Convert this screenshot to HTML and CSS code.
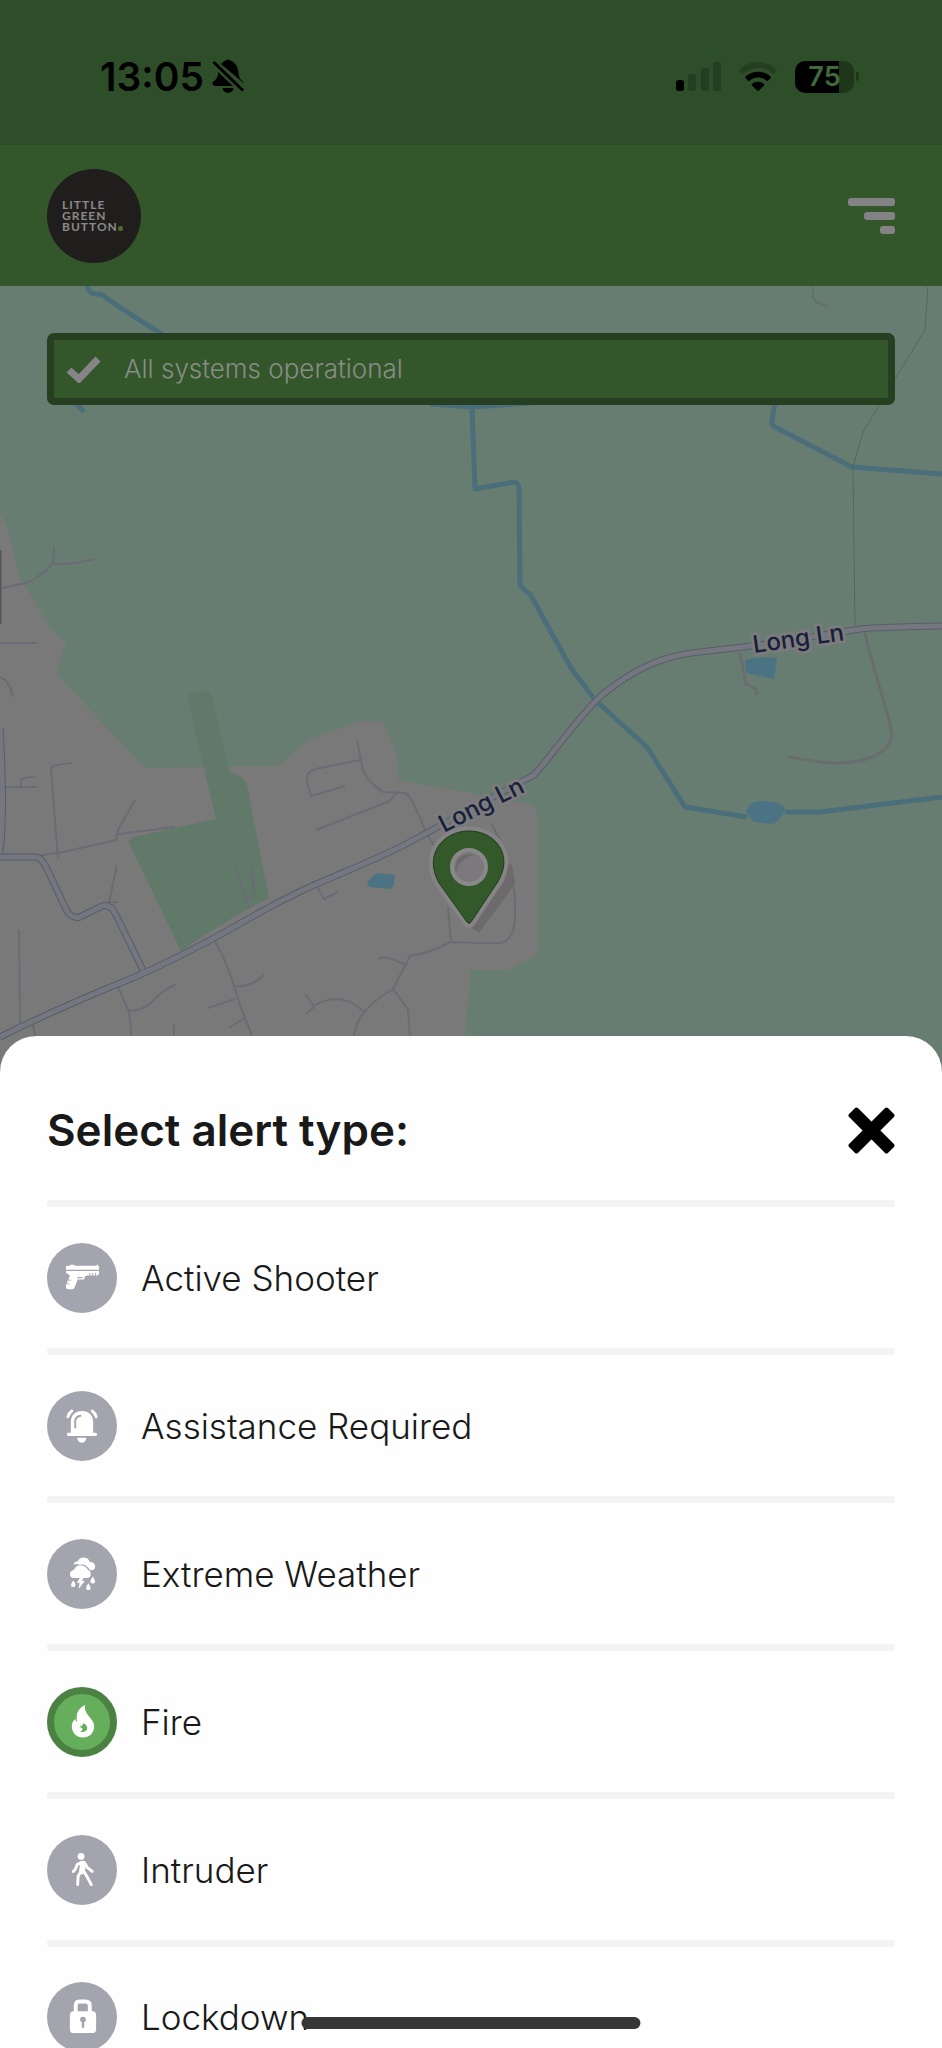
FILE: index.html
```html
<!DOCTYPE html>
<html lang="en">
<head>
<meta charset="utf-8">
<meta name="viewport" content="width=device-width, initial-scale=1">
<title>Little Green Button</title>
<link rel="stylesheet" href="styles.css">
</head>
<body>
<div class="app">
  <div class="status-bar">
    <div class="status-left">
      <span class="time">13:05</span>
      <svg class="bell-off" viewBox="0 0 32 36" aria-hidden="true">
        <path d="M9 5C11 2.500 13 2 13.500 1.500a4 4 0 0 1 5 0C24 4 26 8 26.500 14c.3 4 1.500 6 5 9v1L9 5ZM6 13l15 14H3a2.500 2.500 0 0 1-2-4c4-3.500 5-5 5-10Z"/>
        <path d="M10.500 29h11c-1 6.500-10 6.500-11 0Z"/>
        <path class="bell-slash" d="M1.500 3 31 31.500"/>
      </svg>
    </div>
    <div class="status-right">
      <svg class="signal" viewBox="0 0 45 29" aria-hidden="true">
        <rect x="0" y="18" width="8" height="11" rx="2.500"/>
        <g class="faint"><rect x="12" y="12" width="8" height="17" rx="2.500"/><rect x="25" y="6" width="8" height="23" rx="2.500"/><rect x="37" y="0" width="8" height="29" rx="2.500"/></g>
      </svg>
      <svg class="wifi" viewBox="0 0 38 29" aria-hidden="true">
        <path class="faint" d="M.5 7.500C11-2.500 27-2.500 37.500 7.500c.6.600.6 1 0 1.600L35 11.500c-.6.600-1 .5-1.500 0-8.500-7.500-20.500-7.500-29 0-.5.500-1 .6-1.500 0L.5 9.200c-.6-.6-.6-1.100 0-1.700Z"/>
        <path d="M6.500 14.500c7-6.500 18-6.500 25 0 .6.600.6 1 0 1.600L29 18.700c-.5.500-1 .5-1.500 0-5-4.400-12-4.400-17 0-.5.500-1 .5-1.500 0l-2.500-2.600c-.6-.6-.6-1 0-1.600Z"/>
        <path d="M13 22c3.500-3 8.500-3 12 0 .5.500.5 1 0 1.500l-5 5c-.7.600-1.300.6-2 0l-5-5c-.5-.5-.5-1 0-1.500Z"/>
      </svg>
      <span class="battery"><span class="battery-body">75</span><span class="battery-tip"></span></span>
    </div>
  </div>

  <header class="app-header">
    <div class="logo"><span>LITTLE</span><span>GREEN</span><span>BUTTON<i class="logo-dot"></i></span></div>
    <button class="menu-button" type="button" aria-label="Menu"><i></i><i></i><i></i></button>
  </header>

  <main class="map">
    <svg class="map-canvas" viewBox="0 286 942 790" preserveAspectRatio="xMidYMin slice" role="img" aria-label="Map">
      <rect class="field" x="0" y="286" width="942" height="790"/>
      <path class="town" d="M0 514 7 527 14 554 21 581 28 590 50 628 66 644 56 671 62 680 145 768 278 766 306 741 360 721H383L397 757 398 780 470 793 530 804Q537 806 537 815V955L507 970H471L461 1076H0Z"/>
      <path class="park" d="M188 697Q190 691 206 691 211 692 213 701L230 773Q246 775 248 790L269 898Q225 920 181 951L129 843Q128 839 134 837L216 819 188 700Z"/>
      <g class="water">
        <path d="M745 660Q760 656 777 658L774 679 746 673ZM746 812Q749 800 765 801 785 802 785 811 778 823 772 824L754 822ZM367 882 377 873 395 875 394 884 391 889 369 887Z"/>
      </g>
      <g class="river">
        <path d="M87 284Q88 296 101 294 115 305 165 336M75 402 84 412"/>
        <path d="M430 404 472 407 475 489 514 482Q519 482 519 490L520 584Q523 590 530 594L571 668 595 700 647 747 685 807 747 817M785 812 820 812 942 797"/>
        <path d="M472 407 530 403M776 397 772 420Q771 425 775 427L852 467 942 474"/>
      </g>
      <path class="footpath" d="M928 286 925 330 895 379 863 432 853 467 855 626"/>
      <g class="lane rural">
        <path d="M813 286V297Q815 304 829 306"/>
        <path class="drive" d="M740 653 746 684 756 689 757 695M865 633C870 660 889 712 892 735 889 757 858 763 838 763 815 763 800 758 788 757"/>
      </g>
      <g class="lane">
        <path d="M2 588 26 583Q40 578 53 563L54 546M53 563Q65 566 95 559M0 643H37M0 677Q10 681 13 697M5 787H37M21 787V780Q22 777 35 777M58 859 51 768Q51 765 72 763M36 856 63 852 116 840 118 830 135 800M118 834 175 827M19 930 20 1023M118 902 109 902 117 865M33 1025 38 1050M118 987 129 1012 133 1050M129 1011Q143 1010 151 1003 160 992 176 984M215 941Q228 965 234 986L241 1008Q250 1030 252 1036M234 986C246 987 256 983 264 975M208 1008 235 999M229 1028 246 1017M174 1024V1046"/>
        <path d="M357 740 363 770Q366 780 383 792L405 793Q412 796 425 830L434 846M360 760 315 769Q306 772 307 781L311 796 345 786M316 830 390 801 396 793M236 867 249 909M251 866 255 895 246 899M317 887 324 899 338 892M448 908 451 942 480 943 500 943Q513 941 515 920V900Q515 885 508 879M451 942Q430 953 410 956L393 989Q370 1002 360 1018 353 1030 352 1050M378 959Q385 954 405 965M393 989 408 1009 411 1050M305 994 314 1006Q340 990 363 1011M306 1014 315 1006M491 823 500 840"/>
      </g>
      <path class="road-edge" d="M0 1037C40 1017 65 1006 108 988 165 966 215 938 248 919 315 880 350 873 408 843L534 775C555 752 575 720 602 695 635 668 665 655 700 652L760 645 860 629Q880 627 942 626M0 857H36Q42 858 47 869L67 911Q72 919 80 917L102 906Q110 903 116 915L143 970M0 728Q5 810 0 853"/>
      <path class="road" d="M0 1037C40 1017 65 1006 108 988 165 966 215 938 248 919 315 880 350 873 408 843L534 775C555 752 575 720 602 695 635 668 665 655 700 652L760 645 860 629Q880 627 942 626M0 857H36Q42 858 47 869L67 911Q72 919 80 917L102 906Q110 903 116 915L143 970M0 728Q5 810 0 853"/>
      <path class="map-edge" d="M0 550V624"/>
      <g class="street-name">
        <text transform="translate(754 653) rotate(-8)">Long Ln</text>
        <text transform="translate(444 833) rotate(-27)">Long Ln</text>
      </g>
      <path class="pin-shadow" d="M475 930 510 882 507 865"/>
      <path class="pin-halo" d="M467 922 439 883C423 855 443 831 469 831S515 855 497 883L471 922Q469 925 467 922Z"/>
      <path class="pin" d="M467 922 439 883C423 855 443 831 469 831S515 855 497 883L471 922Q469 925 467 922Z"/>
      <circle class="pin-ring" cx="469" cy="867" r="17"/>
      <path class="pin-hole" d="M456 873C453 859 462 852 475 855 464 857 458 863 456 873Z"/>
    </svg>
    <div class="notice" role="status">
      <svg class="check" viewBox="0 0 36 28" aria-hidden="true"><path d="M3 15 13 24 32 4"/></svg>
      <span>All systems operational</span>
    </div>
  </main>

  <section class="sheet" role="dialog" aria-labelledby="sheet-title">
    <div class="sheet-header">
      <h1 id="sheet-title">Select alert type:</h1>
      <button class="close-button" type="button" aria-label="Close">
        <svg viewBox="0 0 47 47" aria-hidden="true"><path d="M8.500 2.500 23.500 17.500 38.500 2.500 44.500 8.500 29.500 23.500 44.500 38.500 38.500 44.500 23.500 29.500 8.500 44.500 2.500 38.500 17.500 23.500 2.500 8.500Z"/></svg>
      </button>
    </div>
    <ul class="alert-list">
      <li><button class="alert" type="button">
        <span class="badge"><svg viewBox="0 0 36 36" aria-hidden="true">
          <path d="M2 6 5 6 6 5h3l1 1h22l1-1h1v1l1 1v3H1V7Z"/>
          <path d="M1 11.200h34V15h-1.200v1H32v-3h-1v3h-2v-3h-1v3h-2v-3h-1v3h-2.500l-2 1-1 3h-6.500L12 23 9.500 29 8 30H3l-2-1V25h4v-.8H1.800L3 21h3.500v-.8H3.500L5 16 3 14.500 1 13Z"/>
          <path class="cut" d="M13 17.500h5.500l-1.200 1.300H12.500Z"/>
        </svg></span>
        <span>Active Shooter</span></button></li>
      <li><button class="alert" type="button">
        <span class="badge"><svg viewBox="0 0 36 36" aria-hidden="true">
          <path d="M6 25.500V15C6 7 10.500 3 17.500 3S29 7 29 15v10.500h2.500a1.500 1.500 0 0 1 0 3.200h-28a1.500 1.500 0 0 1 0-3.200ZM12.500 30.500h9.500c-.5 7-9 7-9.500 0Z"/>
          <path class="cut-line" d="M10.500 20v-6Q10.500 9 16 8"/>
          <path class="white-line" d="M3 9Q4 5 7 3M32 9Q31 5 28 3"/>
        </svg></span>
        <span>Assistance Required</span></button></li>
      <li><button class="alert" type="button">
        <span class="badge"><svg viewBox="0 0 36 36" aria-hidden="true">
          <path d="M9 8.500Q9.500 6 13 5.500 15 1 20 1.500q4 .5 5.500 4.500 5.500.5 5.500 5 0 4-5.500 3.500-3.500-7-10.500-5.500Q11.500 7.500 9 9Z"/>
          <path d="M8 22.500Q5 21.500 5 18.500 5.500 15 9 14.500 11 9.500 16 9.500q6 .5 7.500 5 3 .5 3 4 0 4-4 4Z"/>
          <path d="m16.500 21-4.500 6.500h3L14 34l6.500-8.500h-3.300L20 21ZM8.500 25q5 7-.2 7-4.500 0 .2-7ZM28.500 21q5 7.200-.1 7.200-4.500 0 .1-7.200ZM24 28q5 7-.1 7-4.600 0 .1-7Z"/>
        </svg></span>
        <span>Extreme Weather</span></button></li>
      <li><button class="alert selected" type="button" aria-pressed="true">
        <span class="badge"><svg viewBox="0 0 36 36" aria-hidden="true">
          <path fill-rule="evenodd" d="M20.500 1C13 5 11 10 12.500 18.500q-2-.5-1.500-3Q7 18 7 23c0 7 5 11.500 11.500 11.500S30 30 30 23c0-8.500-10.500-11-9.500-22ZM16 19c-1 5.500 2.500 4.500 2.500.5 8 3.500 4 11-3 9 2.500-.5 2.500-2 2.500-3.500-1.500.5-3-1.500-2-6Z"/>
        </svg></span>
        <span>Fire</span></button></li>
      <li><button class="alert" type="button">
        <span class="badge"><svg viewBox="0 0 36 36" aria-hidden="true">
          <circle cx="16.500" cy="4.500" r="3.500"/>
          <path class="body-line" d="M18.500 12 17.500 20"/>
          <path class="limb" d="m17 10.500-4.500 2.500-2 5-2 2M20 11l3 5 5 4M16.500 20l-3 5-.5 8.500M19.500 20l3.500 6 4 7.500"/>
        </svg></span>
        <span>Intruder</span></button></li>
      <li><button class="alert" type="button">
        <span class="badge"><svg viewBox="0 0 36 36" aria-hidden="true">
          <path fill-rule="evenodd" d="M9 12.500h19a4 4 0 0 1 4 4V31a4 4 0 0 1-4 4H9a4 4 0 0 1-4-4V16.500a4 4 0 0 1 4-4ZM15.500 21.500a3 3 0 0 0 1.800 2.500L17.200 28.500a1.300 1.300 0 0 0 2.600 0l-.1-4.500A3 3 0 1 0 15.500 21.500Z"/>
          <path class="shackle" d="M11 14V7Q11 2.500 15 2.500h6Q25.500 2.500 25.500 7v7"/>
        </svg></span>
        <span>Lockdown</span></button></li>
    </ul>
  </section>
  <div class="home-indicator"></div>
</div>
</body>
</html>
```

FILE: styles.css
```css
* { box-sizing: border-box; }

body {
  margin: 0;
  font-family: Inter, "Liberation Sans", sans-serif;
  color: #191919;
  background: #fefefe;
}

button {
  margin: 0;
  padding: 0;
  border: 0;
  background: none;
  color: inherit;
  font: inherit;
  cursor: pointer;
}

svg { display: block; }

.app {
  display: flex;
  flex-direction: column;
  height: 100vh;
  overflow: hidden;
}

.status-bar {
  flex: none;
  display: flex;
  align-items: center;
  justify-content: space-between;
  height: 145px;
  padding: 8px 83px 0 100px;
  background: #2d4e29;
  color: #000;
}

.status-left { display: flex; align-items: center; gap: 8px; }
.time { font-size: 39px; font-weight: 600; line-height: 48px; }
.bell-off { width: 32px; height: 36px; }
.bell-slash { fill: none; stroke: #000; stroke-width: 3; }

.status-right { display: flex; align-items: center; gap: 18px; }
.signal { width: 45px; height: 29px; }
.wifi { width: 38px; height: 29px; }
.faint { opacity: 0.2; }

.battery { display: flex; align-items: center; gap: 2px; }
.battery-body {
  width: 59px;
  height: 32px;
  border-radius: 10px;
  background: linear-gradient(90deg, #000 75%, #1e371b 75%);
  color: #416a3c;
  font-size: 27px;
  font-weight: 600;
  line-height: 32px;
  text-align: center;
}
.battery-tip {
  width: 3px;
  height: 9px;
  border-radius: 0 3px 3px 0;
  background: #1e371b;
}

.app-header {
  flex: none;
  display: flex;
  align-items: center;
  justify-content: space-between;
  height: 141px;
  padding: 0 47px;
  background: #33562b;
}

.logo {
  display: flex;
  flex-direction: column;
  justify-content: center;
  width: 94px;
  height: 94px;
  padding-left: 15px;
  border-radius: 50%;
  background: #1f1e1d;
  color: #8a8a8a;
  font-family: Lato, sans-serif;
  font-size: 12px;
  font-weight: 700;
  line-height: 11px;
  letter-spacing: 1px;
}
.logo-dot {
  display: inline-block;
  width: 5px;
  height: 5px;
  border-radius: 50%;
  background: #50702a;
}

.menu-button {
  display: flex;
  flex-direction: column;
  align-items: flex-end;
  gap: 6px;
  width: 47px;
}
.menu-button i { width: 47px; height: 8px; border-radius: 3px; background: #848284; }
.menu-button i:nth-child(2) { width: 31px; }
.menu-button i:nth-child(3) { width: 15px; }

.map {
  flex: none;
  display: grid;
  height: 790px;
}
.map > * { grid-area: 1 / 1; }
.map-canvas { width: 100%; height: 790px; }
.field { fill: #687d71; }
.town { fill: #7a797a; }
.park { fill: #617969; }
.water { fill: #4b7383; }
.river { fill: none; stroke: #4a6e7a; stroke-width: 5; stroke-linejoin: round; }
.footpath { fill: none; stroke: #4d6b5b; stroke-width: 1; }
.lane { fill: none; stroke: #696c74; stroke-width: 2; stroke-linejoin: round; }
.lane.rural { stroke: #637269; }
.lane .drive { stroke: #6a6d70; stroke-width: 3; }
.road-edge { fill: none; stroke: #595d68; stroke-width: 7; }
.road { fill: none; stroke: #74777f; stroke-width: 5; }
.map-edge { fill: none; stroke: #54555a; stroke-width: 3; }
.street-name {
  fill: #16203a;
  stroke: #7b7b7d;
  stroke-width: 6;
  stroke-linejoin: round;
  paint-order: stroke;
  font-size: 24px;
  font-weight: 500;
}
.pin-shadow { fill: none; stroke: #6c6a6b; stroke-width: 10; }
.pin-halo { fill: #7f7d7f; stroke: #858385; stroke-width: 9; stroke-linejoin: round; }
.pin { fill: #33582a; stroke: #213b1c; stroke-width: 1; }
.pin-ring { fill: #7c797c; stroke: #8a888a; stroke-width: 4; }
.pin-hole { fill: #6d6a6d; }

.notice {
  align-self: start;
  display: flex;
  align-items: center;
  gap: 22px;
  margin: 47px 47px 0;
  height: 72px;
  padding: 0 12px;
  border: 7px solid #253f20;
  border-radius: 7px;
  background: #33562b;
  color: #878d85;
  font-size: 26px;
  font-weight: 300;
  line-height: 32px;
}
.check { width: 36px; height: 28px; }
.check path { fill: none; stroke: #868486; stroke-width: 7; stroke-linejoin: miter; }

.sheet {
  position: relative;
  flex: 1 0 auto;
  margin-top: -40px;
  padding: 24px 47px 0;
  border-radius: 36px 36px 0 0;
  background: #fefefe;
}

.sheet-header {
  display: flex;
  align-items: center;
  justify-content: space-between;
  height: 140px;
}
.sheet-header h1 {
  margin: 0;
  font-size: 44px;
  font-weight: 600;
  line-height: 52px;
}
.close-button svg { width: 47px; height: 47px; }
.close-button path { stroke: #000; stroke-width: 4; stroke-linejoin: round; }

.alert-list { margin: 0; padding: 0; list-style: none; }
.alert-list li::before {
  content: "";
  display: block;
  height: 7px;
  border-radius: 4px;
  background: #f3f3f3;
}

.alert {
  display: flex;
  align-items: center;
  gap: 24px;
  width: 100%;
  height: 141px;
  font-size: 35px;
  font-weight: 300;
  line-height: 44px;
  text-align: left;
}
.alert-list li:last-child .alert { height: 139px; }

.badge {
  display: grid;
  place-items: center;
  width: 70px;
  height: 70px;
  border-radius: 50%;
  background: #a4a4af;
}
.badge svg { width: 35px; height: 35px; fill: #fff; }
.selected .badge { border: 7px solid #4b8142; background: #65ae5b; }

.cut { fill: #a4a4af; }
.cut-line { fill: none; stroke: #a4a4af; stroke-width: 2; stroke-linecap: round; }
.white-line { fill: none; stroke: #fff; stroke-width: 3; stroke-linecap: round; }
.body-line { fill: none; stroke: #fff; stroke-width: 6; stroke-linecap: round; }
.limb { fill: none; stroke: #fff; stroke-width: 3; stroke-linecap: round; stroke-linejoin: round; }
.shackle { fill: none; stroke: #fff; stroke-width: 4; }

.home-indicator {
  position: fixed;
  bottom: 19px;
  left: 50%;
  width: 36%;
  height: 12px;
  border-radius: 6px;
  background: #363636;
  transform: translateX(-50%);
}
```
